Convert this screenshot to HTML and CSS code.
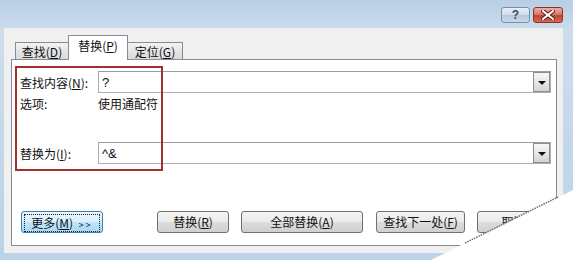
FILE: index.html
```html
<!doctype html>
<html lang="zh-CN">
  <head>
    <meta charset="UTF-8" />
    <title>查找和替换</title>
    <link rel="stylesheet" href="styles.css">
  </head>
  <body>
    <div class="window">
      <div class="titlebar">
        <span class="cap-btn help">?</span>
        <span class="cap-btn close">
          <svg width="14" height="10" viewBox="0 0 14 10">
            <path d="M2 1 L12 9 M12 1 L2 9" stroke="#5a1a10" stroke-width="4" stroke-linecap="square" />
            <path d="M2 1 L12 9 M12 1 L2 9" stroke="#ffffff" stroke-width="2" stroke-linecap="square" />
          </svg>
        </span>
      </div>

      <div class="client">
        <div class="tabs">
          <div class="tab first">查找(<u>D</u>)</div>
          <div class="tab active">替换(<u>P</u>)</div>
          <div class="tab last">定位(<u>G</u>)</div>
        </div>

        <div class="panel">
          <div class="form">
            <label>查找内容(<u>N</u>):</label>
            <div class="combo"><span class="value">?</span><span class="drop"></span></div>
            <span class="opt-label">选项:</span>
            <span class="opt-value">使用通配符</span>
            <label>替换为(<u>I</u>):</label>
            <div class="combo"><span class="value">^&amp;</span><span class="drop"></span></div>
          </div>

          <div class="buttons">
            <button class="btn more"><span class="focus">更多(<u>M</u>) <span class="arrows">&gt;&gt;</span></span></button>
            <button class="btn replace">替换(<u>R</u>)</button>
            <button class="btn all">全部替换(<u>A</u>)</button>
            <button class="btn next">查找下一处(<u>F</u>)</button>
            <button class="btn cancel">取消</button>
          </div>

          <!-- annotation box -->
          <div class="mark"></div>
        </div>
      </div>

      <svg class="curl" width="142" height="72" viewBox="0 0 142 72">
        <path d="M0 72 L142 2 L142 72 Z" fill="#ffffff" />
        <path d="M34 55 L127 9" stroke="#6b6b6b" stroke-width="1.5" stroke-dasharray="1.5 1" fill="none" />
      </svg>
    </div>
  </body>
</html>
```

FILE: styles.css
```css
body {
  margin: 0;
  font-family: "Noto Sans CJK SC", "Liberation Sans", sans-serif;
  font-size: 12px;
  color: #111;
  background: #c9dbec;
}
.window {
  position: relative;
  width: 573px;
  height: 260px;
  overflow: hidden;
  background: linear-gradient(180deg, #b7cee4 0%, #cddded 12%, #c3d7ea 60%, #bcd2e8 100%);
}
.titlebar {
  height: 28px;
  display: flex;
  justify-content: flex-end;
  align-items: flex-start;
  gap: 3px;
  padding: 7px 10px 0 0;
  box-sizing: border-box;
}
.cap-btn {
  height: 16px;
  box-sizing: border-box;
  border-radius: 3px;
  display: flex;
  align-items: center;
  justify-content: center;
}
.help {
  width: 29px;
  border: 1px solid #7890aa;
  background: linear-gradient(180deg, #e6eef7 0%, #cfdceb 48%, #b7c9dc 52%, #c9d8e8 100%);
  color: #3a4a5c;
  font-family: "Liberation Sans", sans-serif;
  font-weight: bold;
  font-size: 12px;
  line-height: 14px;
}
.close {
  width: 30px;
  border: 1px solid #8a3426;
  background: linear-gradient(180deg, #eab1a4 0%, #d8786a 45%, #c4412e 55%, #d66a55 100%);
}
.client {
  margin: 0 10px 0 4px;
  height: 225px;
  background: #f0f0f0;
  display: flex;
  flex-direction: column;
}
.tabs {
  display: flex;
  align-items: flex-end;
  height: 31px;
  padding-left: 11px;
  box-sizing: border-box;
}
.tab {
  height: 18px;
  box-sizing: border-box;
  border: 1px solid #898c95;
  border-bottom: none;
  background: linear-gradient(180deg, #f3f3f3 0%, #e4e4e4 50%, #d9d9d9 100%);
  display: flex;
  align-items: center;
  justify-content: center;
  line-height: 16px;
  margin-bottom: -1px;
}
.tab.first {
  width: 53px;
  border-right: none;
}
.tab.active {
  width: 60px;
  height: 25px;
  background: #ffffff;
  position: relative;
  z-index: 1;
  padding-bottom: 4px;
}
.tab.last {
  width: 55px;
  border-left: none;
}
.panel {
  position: relative;
  margin: 0 6px 7px 7px;
  flex: 1;
  background: #ffffff;
  border: 1px solid #898c95;
  padding: 11px 5px 12px 8px;
  display: flex;
  flex-direction: column;
}
.form {
  display: grid;
  grid-template-columns: 78px 1fr;
  grid-template-rows: 22px 49px 22px;
  align-items: center;
}
.opt-label,
.opt-value {
  align-self: start;
  padding-top: 2px;
  line-height: 18px;
}
.combo {
  height: 22px;
  box-sizing: border-box;
  border: 1px solid #abadb3;
  border-top-color: #9a9ca3;
  display: flex;
  align-items: center;
  justify-content: space-between;
}
.combo .value {
  padding-left: 3px;
  font-family: "Liberation Sans", sans-serif;
  font-size: 13px;
}
.drop {
  width: 17px;
  height: 20px;
  box-sizing: border-box;
  border: 1px solid #8b8e93;
  background: linear-gradient(180deg, #f6f6f6 0%, #e8e8e8 50%, #d3d3d3 100%);
  display: flex;
  align-items: center;
  justify-content: center;
}
.drop::after {
  content: "";
  border-left: 4px solid transparent;
  border-right: 4px solid transparent;
  border-top: 4px solid #111;
  margin-top: 1px;
}
.buttons {
  display: flex;
  margin-top: auto;
  padding-left: 1px;
}
.btn {
  height: 22px;
  box-sizing: border-box;
  border: 1px solid #707070;
  border-radius: 3px;
  background: linear-gradient(180deg, #f3f3f3 0%, #ebebeb 48%, #dddddd 52%, #cfcfcf 100%);
  font-family: inherit;
  font-size: 12px;
  color: #111;
  padding: 0;
  line-height: 18px;
}
.btn.more {
  width: 82px;
  border-color: #3c7fb1;
  background: linear-gradient(180deg, #eaf6fd 0%, #d9f0fc 48%, #bee6fd 52%, #a7d9f5 100%);
  padding: 2px;
}
.btn.more .focus {
  display: block;
  height: 16px;
  line-height: 15px;
  border: 1px dotted #222;
}
.arrows {
  font-size: 9px;
  letter-spacing: 2px;
  margin-left: 3px;
}
.btn.replace {
  width: 72px;
  margin-left: 54px;
}
.btn.all {
  width: 122px;
  margin-left: 12px;
}
.btn.next {
  width: 89px;
  margin-left: 13px;
}
.btn.cancel {
  width: 73px;
  margin-left: 12px;
}
.mark {
  position: absolute;
  left: 3px;
  top: 6px;
  width: 148px;
  height: 105px;
  box-sizing: border-box;
  border: 2px solid #a52f2f;
}
.curl {
  position: absolute;
  right: 0;
  bottom: 0;
}
```
